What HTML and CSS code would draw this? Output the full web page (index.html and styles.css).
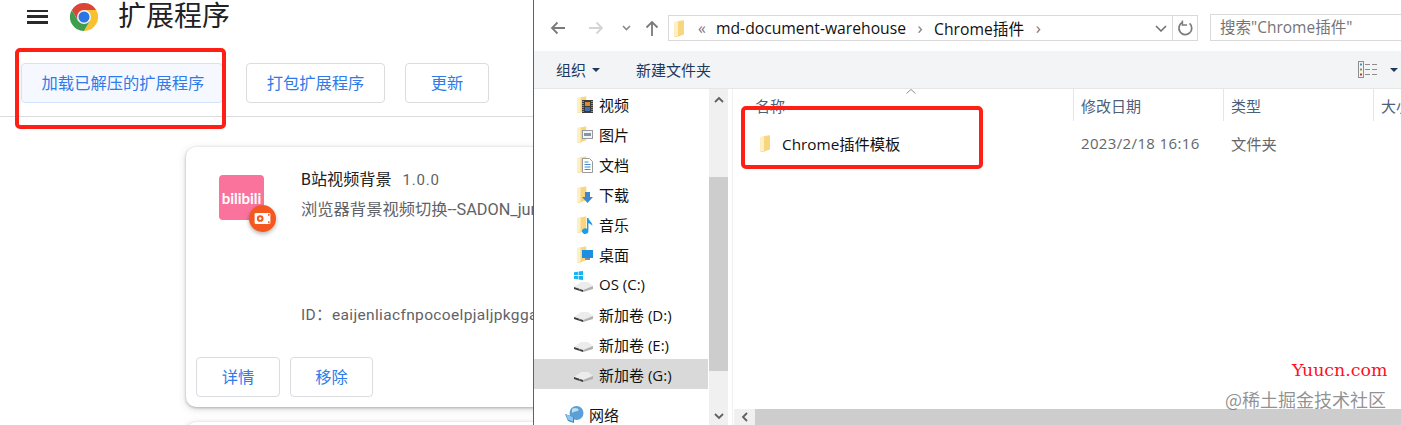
FILE: index.html
```html
<!DOCTYPE html>
<html lang="zh-CN">
<head>
<meta charset="utf-8">
<title>扩展程序</title>
<link rel="stylesheet" href="styles.css">
</head>
<body>
<svg class="defs" width="0" height="0" aria-hidden="true">
  <defs>
    <linearGradient id="fold" x1="0" y1="0" x2="1" y2="1">
      <stop offset="0" stop-color="#ffe9a8"/><stop offset="1" stop-color="#f3c96a"/>
    </linearGradient>
    <symbol id="folder" viewBox="0 0 12 18">
      <path d="M0 2 L10 0 V15 L3 18 H0 Z" fill="url(#fold)"/>
      <path d="M0 2 L4 2 V17 L0 18 Z" fill="#fdf0c4"/>
      <path d="M4 1.5 L10 1 V15 L4 16.5 Z" fill="#f8d67f"/>
    </symbol>
    <symbol id="drive" viewBox="0 0 19 10">
      <path d="M0 5 L7 0 H14 L19 4 L9 8 Z" fill="#ececec"/>
      <path d="M9 8 L19 4 V7 L9 10 Z" fill="#b0b0b0"/>
      <path d="M0 5 L9 8 V10 L0 7 Z" fill="#3d3d3d"/>
      <rect x="5" y="7.2" width="1.6" height="1.2" fill="#4caf50"/>
    </symbol>
  </defs>
</svg>

<div class="page">
  <section class="ext">
    <header class="ext-head">
      <div class="burger"><span></span><span></span><span></span></div>
      <svg class="chrome" viewBox="0 0 48 48" width="28" height="28">
        <path d="M3.2 12A24 24 0 0 1 44.8 12H24L13.6 30Z" fill="#db4437"/>
        <path d="M44.8 12A24 24 0 0 1 24 48L34.4 30L24 12Z" fill="#fbc02d"/>
        <path d="M24 48A24 24 0 0 1 3.2 12L13.6 30H34.4Z" fill="#3f9e4d"/>
        <circle cx="24" cy="24" r="12" fill="#f1f3f4"/>
        <circle cx="24" cy="24" r="9.4" fill="#2a75e6"/>
      </svg>
      <h1 class="ext-title">扩展程序</h1>
    </header>
    <div class="ext-tools">
      <button class="btn btn-load">加载已解压的扩展程序</button>
      <button class="btn btn-pack">打包扩展程序</button>
      <button class="btn btn-update">更新</button>
    </div>
    <div class="ext-list">
      <article class="card">
        <div class="card-top">
          <div class="app-icon">
            <span class="app-word">bilibili</span>
            <span class="app-badge">
              <svg viewBox="0 0 18 14" width="17" height="13">
                <rect x="0.5" y="1" width="17" height="12" rx="1.5" fill="#fff"/>
                <circle cx="6.5" cy="7" r="3.6" fill="#f4581f"/>
                <circle cx="6.5" cy="7" r="1.4" fill="#fff"/>
                <rect x="15" y="2" width="1.6" height="2" fill="#f4581f"/>
                <rect x="15" y="10" width="1.6" height="2" fill="#f4581f"/>
              </svg>
            </span>
          </div>
          <div class="card-body">
            <div class="card-name">B站视频背景<span class="card-ver">1.0.0</span></div>
            <div class="card-desc">浏览器背景视频切换--SADON_jun</div>
            <div class="card-id">ID：eaijenliacfnpocoelpjaljpkggabcd</div>
          </div>
        </div>
        <div class="card-actions">
          <button class="btn btn-detail">详情</button>
          <button class="btn btn-remove">移除</button>
        </div>
      </article>
      <article class="card card-next"></article>
    </div>
  </section>

  <section class="win">
    <div class="win-nav">
      <svg class="nav-ico nav-back" viewBox="0 0 16 14" width="16" height="14"><path d="M15 7H2M7.5 1.5L2 7l5.5 5.5" fill="none" stroke="#7b7b7b" stroke-width="1.8"/></svg>
      <svg class="nav-ico nav-fwd" viewBox="0 0 16 14" width="16" height="14"><path d="M1 7H14M8.5 1.5L14 7l-5.5 5.5" fill="none" stroke="#d4d4d4" stroke-width="1.8"/></svg>
      <svg class="nav-ico nav-down" viewBox="0 0 9 6" width="9" height="6"><path d="M1 1l3.5 3.5L8 1" fill="none" stroke="#8a8a8a" stroke-width="1.6"/></svg>
      <svg class="nav-ico nav-up" viewBox="0 0 14 16" width="14" height="16"><path d="M7 16V2M1.5 7.5L7 2l5.5 5.5" fill="none" stroke="#7b7b7b" stroke-width="1.8"/></svg>
      <div class="addr">
        <svg class="addr-folder" width="12" height="17"><use href="#folder"/></svg>
        <span class="addr-more">«</span>
        <span class="addr-part">md-document-warehouse</span>
        <span class="addr-sep">›</span>
        <span class="addr-part">Chrome插件</span>
        <span class="addr-sep">›</span>
        <span class="addr-fill"></span>
        <svg class="addr-drop" viewBox="0 0 12 7" width="12" height="7"><path d="M1 1l5 5 5-5" fill="none" stroke="#6d6d6d" stroke-width="1.5"/></svg>
        <span class="addr-refresh">
          <svg viewBox="0 0 16 16" width="16" height="16"><path d="M5.2 2.6A6.4 6.4 0 1 0 12.6 3.4" fill="none" stroke="#7b7b7b" stroke-width="1.7"/><path d="M5.4 0.4V5H10" fill="none" stroke="#7b7b7b" stroke-width="1.5"/></svg>
        </span>
      </div>
      <div class="search">搜索"Chrome插件"</div>
    </div>

    <div class="win-cmd">
      <span class="cmd-item">组织<i class="caret"></i></span>
      <span class="cmd-item cmd-new">新建文件夹</span>
      <span class="cmd-fill"></span>
      <svg class="view-ico" viewBox="0 0 19 17" width="19" height="17">
        <rect x="0.5" y="0.5" width="5" height="16" fill="#f4f4f4" stroke="#8e8e8e"/>
        <rect x="2" y="2.5" width="2" height="2" fill="#4a89c8"/>
        <rect x="2" y="7.5" width="2" height="2" fill="#7f9a3a"/>
        <rect x="2" y="12.5" width="2" height="2" fill="#c0392b"/>
        <path d="M7 3.5h5M14 3.5h5M7 8.5h5M14 8.5h5M7 13.5h5M14 13.5h5" stroke="#8e8e8e"/>
      </svg>
      <i class="caret caret-view"></i>
    </div>

    <div class="win-main">
      <nav class="tree">
        <div class="tree-list">
          <div class="row lib"><span class="lib-ico"><svg width="11" height="17"><use href="#folder"/></svg>
            <svg class="over" viewBox="0 0 11 13" width="11" height="13"><rect width="11" height="13" fill="#3a3a3a"/><rect x="3" y="2" width="5" height="4" fill="#d98a2b"/><rect x="3" y="7" width="5" height="4" fill="#3f6fb5"/><path d="M1 1v11M10 1v11" stroke="#ddd" stroke-dasharray="1 1"/></svg></span>视频</div>
          <div class="row lib"><span class="lib-ico"><svg width="11" height="17"><use href="#folder"/></svg>
            <svg class="over" viewBox="0 0 11 9" width="11" height="9"><rect x="0.5" y="0.5" width="10" height="8" fill="#f2f5f8" stroke="#9a9a9a"/><rect x="2" y="3" width="7" height="3" fill="#7f97a8"/></svg></span>图片</div>
          <div class="row lib"><span class="lib-ico"><svg width="11" height="17"><use href="#folder"/></svg>
            <svg class="over over-doc" viewBox="0 0 11 15" width="11" height="15"><path d="M0.5 0.5H7.5L10.5 3.5V14.5H0.5Z" fill="#fff" stroke="#9a9a9a"/><path d="M2.5 4h4M2.5 6.5h6M2.5 9h6M2.5 11.5h6" stroke="#3f8fd0"/></svg></span>文档</div>
          <div class="row lib"><span class="lib-ico"><svg width="11" height="17"><use href="#folder"/></svg>
            <svg class="over over-low" viewBox="0 0 11 11" width="11" height="11"><path d="M3 0H8V5H11L5.5 11L0 5H3Z" fill="#3f88cc"/></svg></span>下载</div>
          <div class="row lib"><span class="lib-ico"><svg width="11" height="17"><use href="#folder"/></svg>
            <svg class="over over-doc" viewBox="0 0 11 16" width="11" height="16"><path d="M5 0H6.4C7 3 10.5 4 10.5 8C9.5 6.5 8 5.5 6.4 5.2V13A3.2 2.8 0 1 1 5 10.8Z" fill="#1c9be8"/></svg></span>音乐</div>
          <div class="row lib"><span class="lib-ico"><svg width="11" height="17"><use href="#folder"/></svg>
            <svg class="over" viewBox="0 0 11 10" width="11" height="10"><rect width="11" height="8" fill="#1c8fe0"/><rect x="3" y="8" width="5" height="2" fill="#8a8a8a"/></svg></span>桌面</div>
          <div class="row drv"><span class="drv-ico"><svg class="win-flag" viewBox="0 0 11 11" width="9" height="9"><path d="M0 1.5L4.8 .8V5H0ZM5.6 .7L11 0V5H5.6ZM0 6H4.8V10.2L0 9.5ZM5.6 6H11V11L5.6 10.3Z" fill="#12b5ef"/></svg><svg width="19" height="10"><use href="#drive"/></svg></span>OS (C:)</div>
          <div class="row drv"><span class="drv-ico"><svg width="19" height="10"><use href="#drive"/></svg></span>新加卷 (D:)</div>
          <div class="row drv"><span class="drv-ico"><svg width="19" height="10"><use href="#drive"/></svg></span>新加卷 (E:)</div>
          <div class="row drv row-sel"><span class="drv-ico"><svg width="19" height="10"><use href="#drive"/></svg></span>新加卷 (G:)</div>
          <div class="row net"><span class="net-ico"><svg viewBox="0 0 19 17" width="19" height="17"><circle cx="11.5" cy="7" r="7" fill="#5b9fd6"/><path d="M7 3c3-2 6-1 7 1-2 2-5 1-7 3z" fill="#bfe0f2"/><path d="M0 8l9 3v6l-6-2z" fill="#3a87cf"/><path d="M1 8.5l7 2.5v4.5l-5-1.8z" fill="#8cc7ee"/></svg></span>网络</div>
        </div>
        <div class="vbar">
          <svg class="vbar-up" viewBox="0 0 10 7" width="10" height="7"><path d="M1 6l4-4 4 4" fill="none" stroke="#606060" stroke-width="1.8"/></svg>
          <div class="vbar-thumb"></div>
          <svg class="vbar-dn" viewBox="0 0 10 7" width="10" height="7"><path d="M1 1l4 4 4-4" fill="none" stroke="#606060" stroke-width="1.8"/></svg>
        </div>
      </nav>
      <div class="files">
        <div class="cols">
          <div class="col col-name">名称<svg class="sort" viewBox="0 0 10 5" width="10" height="5"><path d="M.5 4.5L5 .5l4.5 4" fill="none" stroke="#8e8e8e"/></svg></div>
          <div class="col col-date">修改日期</div>
          <div class="col col-type">类型</div>
          <div class="col col-size">大小</div>
        </div>
        <div class="file-row">
          <div class="cell cell-name"><svg width="12" height="17"><use href="#folder"/></svg>Chrome插件模板</div>
          <div class="cell cell-date">2023/2/18 16:16</div>
          <div class="cell cell-type">文件夹</div>
        </div>
        <div class="files-fill"></div>
        <div class="hbar">
          <span class="hbar-left"><svg viewBox="0 0 7 10" width="7" height="10"><path d="M6 1L2 5l4 4" fill="none" stroke="#606060" stroke-width="1.8"/></svg></span>
          <div class="hbar-thumb"></div>
        </div>
      </div>
    </div>
  </section>
</div>

<div class="mark mark-one"></div>
<div class="mark mark-two"></div>
<div class="wm wm-site">Yuucn.com</div>
<div class="wm wm-jj">@稀土掘金技术社区</div>
</body>
</html>
```
FILE: styles.css
```css
* { box-sizing: border-box; }
html, body { margin: 0; padding: 0; background: #fff; }
body { width: 1401px; height: 425px; overflow: hidden; position: relative; font-family: Roboto, "Noto Sans CJK SC", sans-serif; }
.defs { position: absolute; }
.page { display: flex; width: 1401px; height: 425px; overflow: hidden; }

/* Left: extensions page */
.ext { width: 534px; flex: none; height: 425px; overflow: hidden; border-right: 1px solid #2f6ea5; background: #fff; }
.ext-head { display: flex; align-items: center; height: 33px; padding-left: 27px; }
.burger { width: 21px; height: 14px; display: flex; flex-direction: column; justify-content: space-between; }
.burger span { display: block; height: 2.5px; background: #2a2a2a; }
.chrome { margin-left: 22px; }
.ext-title { margin: 0 0 0 20px; font-size: 28px; font-weight: 400; color: #202124; line-height: 33px; }
.ext-tools { display: flex; align-items: flex-start; height: 84px; padding: 30px 0 0 21px; border-bottom: 1px solid #dadce0; }
.btn { height: 40px; padding: 0 0 2px; font: 16.3px Roboto, "Noto Sans CJK SC", sans-serif; color: #2f7bea; background: #fff; border: 1px solid #dadce0; border-radius: 4px; }
.btn-load { width: 202px; padding-left: 2px; background: #f5f9ff; border-color: #d2e3fc; }
.btn-pack { width: 139px; margin-left: 23px; }
.btn-update { width: 84px; margin-left: 20px; }
.ext-list { padding: 30px 0 0 186px; }
.card { width: 480px; height: 260px; background: #fff; border-radius: 10px; box-shadow: 0 1px 3px rgba(60,64,67,.35), 0 2px 8px rgba(60,64,67,.18); display: flex; flex-direction: column; }
.card-next { margin-top: 15px; height: 20px; }
.card-top { display: flex; flex: 1; padding: 21px 0 0 33px; min-height: 0; }
.app-icon { position: relative; width: 45px; height: 45px; margin-top: 7px; background: #f9739d; border-radius: 4px; display: flex; align-items: center; justify-content: center; flex: none; }
.app-word { font: 700 15px Lato, sans-serif; color: #fff; line-height: 16px; }
.app-badge { position: absolute; right: -12px; bottom: -12px; width: 27px; height: 27px; border-radius: 50%; background: #f4581f; display: flex; align-items: center; justify-content: center; box-shadow: 0 2px 4px rgba(0,0,0,.3); }
.card-body { margin-left: 37px; white-space: nowrap; }
.card-name { font-size: 16.1px; line-height: 24px; color: #202124; }
.card-ver { margin-left: 11px; color: #5f6368; font-size: 15px; letter-spacing: .8px; }
.card-desc { margin-top: 6px; font-size: 16.3px; line-height: 24px; color: #5f6368; }
.card-id { margin-top: 81px; font-size: 15.5px; line-height: 24px; color: #5f6368; letter-spacing: .35px; }
.card-actions { display: flex; gap: 10px; padding: 0 0 10px 10px; height: 50px; }
.btn-detail { width: 84px; }
.btn-remove { width: 83px; }

/* Right: file explorer */
.win { flex: 1; min-width: 0; height: 425px; display: flex; flex-direction: column; background: #fff; font-family: "Open Sans", "Noto Sans CJK SC", sans-serif; color: #1a1a1a; }
.win-nav { display: flex; align-items: center; height: 51px; padding: 4px 0 0 16px; flex: none; }
.nav-fwd { margin-left: 22px; }
.nav-down { margin-left: 18px; }
.nav-up { margin-left: 14px; }
.addr { display: flex; align-items: center; width: 530px; height: 26px; margin-left: 9px; margin-top: 1px; border: 1px solid #d9d9d9; font-size: 15.7px; white-space: nowrap; color: #111; }
.addr-folder { margin-left: 5px; }
.addr-more { margin-left: 12px; color: #777; width: 18px; }
.addr-sep { margin: 0 11.5px; color: #777; font-size: 17px; line-height: 20px; }
.addr-fill { flex: 1; }
.addr-drop { margin-right: 5px; }
.addr-refresh { width: 25px; height: 100%; border-left: 1px solid #d9d9d9; display: flex; align-items: center; justify-content: center; }
.search { flex: 1; height: 27px; margin-left: 12px; border: 1px solid #d9d9d9; border-right: 0; padding-left: 9px; font-size: 15.5px; line-height: 25px; color: #757575; white-space: nowrap; }
.win-cmd { display: flex; align-items: center; height: 38px; flex: none; padding: 0 3px 0 22px; background: #f3f4f6; font-size: 15px; color: #1e395b; border-bottom: 1px solid #e6e6e6; }
.cmd-item { display: flex; align-items: center; white-space: nowrap; }
.cmd-new { margin-left: 36px; }
.cmd-fill { flex: 1; }
.caret { display: block; width: 0; height: 0; margin-left: 6px; border: 4px solid transparent; border-top: 4px solid #1e395b; border-bottom: 0; }
.caret-view { margin-left: 13px; }
.view-ico { display: block; }
.win-main { flex: 1; min-height: 0; display: flex; }
.tree { width: 199px; flex: none; display: flex; padding-right: 4px; border-right: 1px solid #f0f0f0; }
.tree-list { width: 174px; flex: none; font-size: 15px; color: #111; }
.row { display: flex; align-items: center; height: 30px; white-space: nowrap; }
.row-sel { background: #d9d9d9; }
.lib-ico { position: relative; display: block; width: 22px; height: 17px; margin-left: 43px; }
.lib-ico > svg:first-child { display: block; }
.over { position: absolute; left: 5px; top: 4px; }
.over-doc { top: 2px; }
.over-low { top: 6px; }
.drv-ico { position: relative; display: flex; align-items: flex-end; width: 25px; height: 16px; margin-left: 40px; }
.win-flag { position: absolute; left: 0; top: -5px; }
.net { margin-top: 10px; }
.net-ico { display: block; width: 24px; height: 17px; margin-left: 31px; }
.vbar { width: 19px; margin-left: 1px; flex: none; background: #f0f0f0; display: flex; flex-direction: column; align-items: center; }
.vbar-up { margin-top: 7px; }
.vbar-thumb { width: 100%; height: 194px; margin-top: 74px; background: #cdcdcd; }
.vbar-dn { margin-top: 42px; }
.files { flex: 1; min-width: 0; display: flex; flex-direction: column; }
.cols { display: flex; height: 32px; flex: none; font-size: 15px; color: #4c607a; }
.col { position: relative; flex: none; width: 150px; padding-left: 7px; line-height: 34px; border-right: 1px solid #e5e5e5; white-space: nowrap; }
.col-name { width: 341px; padding-left: 22px; }
.col-size { border-right: 0; }
.sort { position: absolute; left: 173px; top: 0; }
.file-row { display: flex; align-items: center; height: 44px; flex: none; font-size: 15.3px; white-space: nowrap; }
.cell { flex: none; }
.cell-name { display: flex; align-items: center; gap: 10px; width: 348px; padding-left: 27px; color: #111; }
.cell-date { width: 150px; font-size: 15px; letter-spacing: .36px; color: #666; }
.cell-type { font-size: 15.3px; color: #666; }
.files-fill { flex: 1; }
.hbar { display: flex; height: 16px; flex: none; margin-left: 1px; background: #f0f0f0; }
.hbar-left { width: 21px; display: flex; align-items: center; justify-content: center; }
.hbar-thumb { flex: 1; background: #cdcdcd; }

/* Overlays: hand-drawn annotations and watermarks */
.mark { position: absolute; border: 4px solid #ff1f14; border-radius: 5px; pointer-events: none; }
.mark-one { left: 15px; top: 48px; width: 211px; height: 81px; }
.mark-two { left: 741px; top: 106px; width: 242px; height: 63px; }
.wm { position: absolute; white-space: nowrap; }
.wm-site { left: 1292px; top: 360px; font: 400 17.4px "DejaVu Serif", serif; color: #ff0f1f; }
.wm-jj { left: 1225px; top: 387px; font-size: 18px; line-height: 24px; color: rgba(110,110,110,.75); font-family: "Noto Sans CJK SC", sans-serif; }
```
